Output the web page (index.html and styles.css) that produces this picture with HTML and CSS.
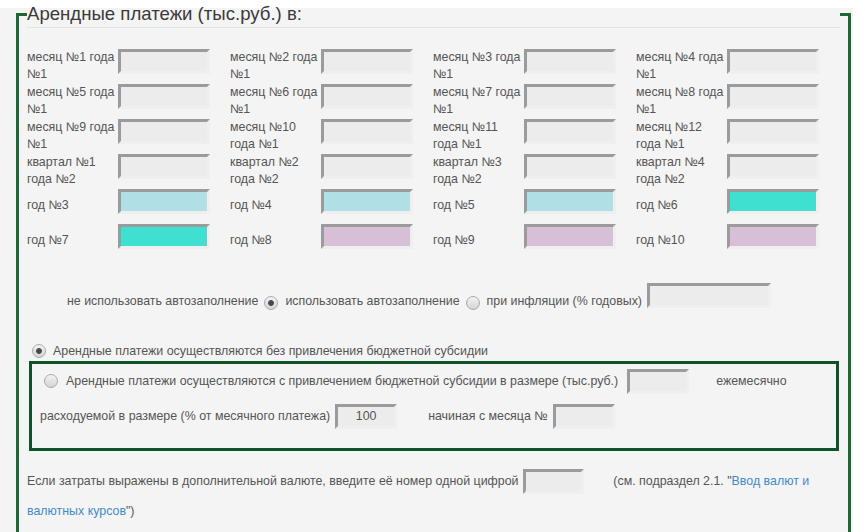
FILE: index.html
```html
<!DOCTYPE html>
<html lang="ru">
<head>
<meta charset="utf-8">
<title>Арендные платежи</title>
<link rel="stylesheet" href="styles.css">
</head>
<body>
<div class="panel">
  <fieldset class="rent">
    <legend>Арендные платежи (тыс.руб.) в:</legend>
    <div class="grid">
      <div class="cell"><label class="lbl">месяц №1 года<br>№1</label><input class="fld"></div>
      <div class="cell"><label class="lbl">месяц №2 года<br>№1</label><input class="fld"></div>
      <div class="cell"><label class="lbl">месяц №3 года<br>№1</label><input class="fld"></div>
      <div class="cell"><label class="lbl">месяц №4 года<br>№1</label><input class="fld"></div>
      <div class="cell"><label class="lbl">месяц №5 года<br>№1</label><input class="fld"></div>
      <div class="cell"><label class="lbl">месяц №6 года<br>№1</label><input class="fld"></div>
      <div class="cell"><label class="lbl">месяц №7 года<br>№1</label><input class="fld"></div>
      <div class="cell"><label class="lbl">месяц №8 года<br>№1</label><input class="fld"></div>
      <div class="cell"><label class="lbl">месяц №9 года<br>№1</label><input class="fld"></div>
      <div class="cell"><label class="lbl">месяц №10<br>года №1</label><input class="fld"></div>
      <div class="cell"><label class="lbl">месяц №11<br>года №1</label><input class="fld"></div>
      <div class="cell"><label class="lbl">месяц №12<br>года №1</label><input class="fld"></div>
      <div class="cell"><label class="lbl">квартал №1<br>года №2</label><input class="fld"></div>
      <div class="cell"><label class="lbl">квартал №2<br>года №2</label><input class="fld"></div>
      <div class="cell"><label class="lbl">квартал №3<br>года №2</label><input class="fld"></div>
      <div class="cell"><label class="lbl">квартал №4<br>года №2</label><input class="fld"></div>
      <div class="cell yr"><label class="lbl">год №3</label><input class="fld blue"></div>
      <div class="cell yr"><label class="lbl">год №4</label><input class="fld blue"></div>
      <div class="cell yr"><label class="lbl">год №5</label><input class="fld blue"></div>
      <div class="cell yr"><label class="lbl">год №6</label><input class="fld turq"></div>
      <div class="cell yr"><label class="lbl">год №7</label><input class="fld turq"></div>
      <div class="cell yr"><label class="lbl">год №8</label><input class="fld thistle"></div>
      <div class="cell yr"><label class="lbl">год №9</label><input class="fld thistle"></div>
      <div class="cell yr"><label class="lbl">год №10</label><input class="fld thistle"></div>
    </div>

    <div class="auto">
      <span class="t">не использовать автозаполнение</span>
      <input type="radio" name="auto" class="rad" checked>
      <span class="t">использовать автозаполнение</span>
      <input type="radio" name="auto" class="rad">
      <span class="t">при инфляции (% годовых)</span>
      <input class="fld infl">
    </div>

    <div class="nosub">
      <input type="radio" name="sub" class="rad" checked>
      <span>Арендные платежи осуществляются без привлечения бюджетной субсидии</span>
    </div>

    <div class="subbox">
      <div class="srow r1">
        <input type="radio" name="sub" class="rad">
        <span>Арендные платежи осуществляются с привлечением бюджетной субсидии в размере (тыс.руб.)</span>
        <input class="fld sm">
        <span class="monthly">ежемесячно</span>
      </div>
      <div class="srow r2">
        <span>расходуемой в размере (% от месячного платежа)</span>
        <input class="fld sm" value="100">
        <span class="from">начиная с месяца №</span>
        <input class="fld sm">
      </div>
    </div>

    <p class="cur">Если затраты выражены в дополнительной валюте, введите её номер одной цифрой <input class="fld sm"> <span class="see">(см. подраздел 2.1. "<a href="#" class="lnk">Ввод валют и<br>валютных курсов</a>")</span></p>
  </fieldset>
</div>
</body>
</html>
```
FILE: styles.css
```css
* {
  box-sizing: border-box;
}

html, body {
  overflow: hidden;
}

body {
  margin: 0;
  background: #ffffff;
  font-family: "Liberation Sans", Arial, sans-serif;
  font-size: 12.4px;
  color: #555555;
}

.panel {
  display: flow-root;
  margin-top: 8px;
  width: 853px;
  height: 524px;
  background: #f4f4f4;
}

.rent {
  margin: -7px 0 0 16px;
  width: 835px;
  min-inline-size: 0;
  padding: 0 8px 14px;
  border: 3px solid #1b6833;
}

.rent legend {
  width: 100%;
  padding: 0;
  font-size: 18.6px;
  line-height: 26px;
  color: #3a3a3a;
  border-bottom: 1px solid #e2e2e2;
}

.grid {
  display: grid;
  grid-template-columns: repeat(4, 203px);
  grid-auto-rows: 35px;
  margin-top: 21px;
}

.cell {
  display: flex;
  align-items: flex-start;
}

.lbl {
  width: 91px;
  flex: none;
  line-height: 17px;
  white-space: nowrap;
}

.yr .lbl {
  margin-top: 8px;
}

.fld {
  width: 92px;
  height: 25px;
  flex: none;
  margin: 0;
  padding: 0;
  border: 3px solid;
  border-color: #9b9b9b #efefef #efefef #9b9b9b;
  background: #ececec;
  font: 12.4px "Liberation Sans", Arial, sans-serif;
  color: #555555;
  text-align: center;
}

.fld.blue { background: #b0dfe5; }
.fld.turq { background: #40e0d0; }
.fld.thistle { background: #d8bfd8; }

.fld.infl {
  width: 124px;
  margin-left: 5px;
}

.fld.sm {
  width: 62px;
}

.rad {
  -webkit-appearance: none;
  appearance: none;
  width: 14px;
  height: 14px;
  flex: none;
  margin: 0;
  border: 1px solid #aaaaaa;
  border-radius: 50%;
  background: linear-gradient(#f3f3f3, #d4d4d4);
}

.rad:checked {
  background: radial-gradient(circle, #4a4a4a 0 2.5px, rgba(74, 74, 74, 0) 3.3px), linear-gradient(#f3f3f3, #d4d4d4);
}

.auto {
  display: flex;
  align-items: flex-end;
  height: 25px;
  margin-top: 24px;
  padding-left: 40px;
}

.auto .t {
  line-height: 17px;
  margin-bottom: -2px;
}

.auto .rad {
  margin: 0 7px -2px 6px;
}

.nosub {
  display: flex;
  align-items: center;
  height: 17px;
  margin-top: 34px;
}

.nosub .rad {
  margin: 0 7px 0 5px;
}

.subbox {
  margin: 2px 0 0 2px;
  width: 810px;
  padding: 0 8px 14px;
  border: 3px solid #11522a;
}

.srow {
  display: flex;
  align-items: center;
}

.r1 {
  height: 34px;
}

.r2 {
  height: 36px;
}

.r1 .rad {
  margin: 0 8px 0 4px;
}

.r1 .fld {
  margin-left: 9px;
}

.monthly {
  margin-left: 27px;
}

.r2 .fld {
  margin-left: 5px;
}

.from {
  margin-left: 31px;
}

.r2 .from + .fld {
  margin-left: 5px;
}

.cur {
  margin: 15px 0 0;
  line-height: 30px;
  white-space: nowrap;
}

.cur .fld {
  width: 61px;
  vertical-align: middle;
  margin: 0 2px 0 1px;
}

.see {
  margin-left: 24px;
}

.lnk {
  color: #428bca;
  text-decoration: none;
}
```
